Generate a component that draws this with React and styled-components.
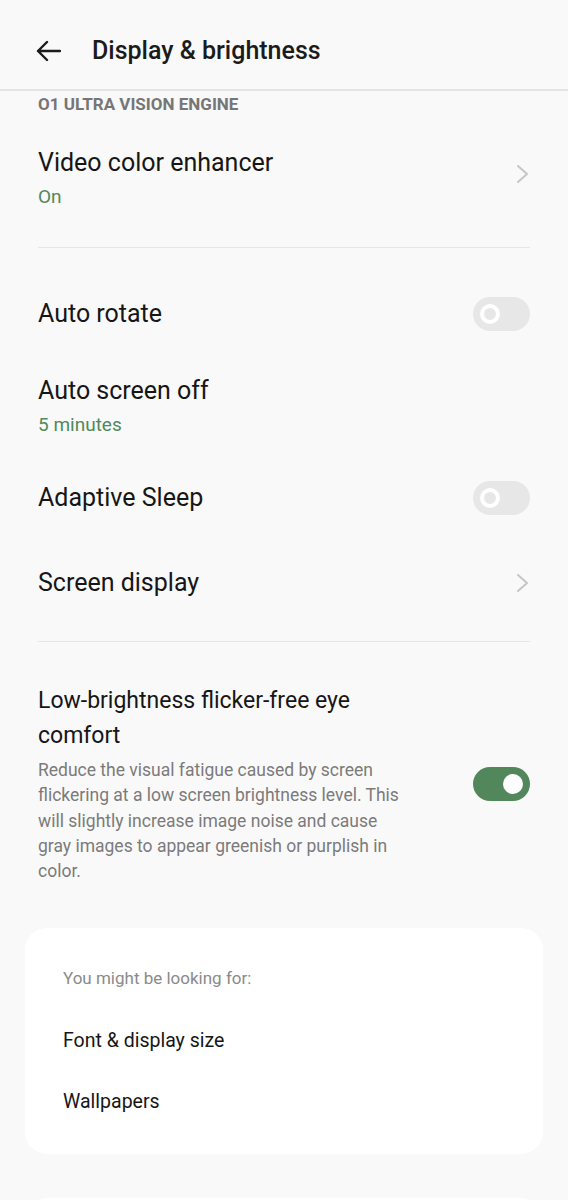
import React from 'react'
import styled, { createGlobalStyle } from 'styled-components'

const Global = createGlobalStyle`
  * { box-sizing: border-box; }
  body {
    margin: 0;
    background: #f9f9f9;
    font-family: Roboto, "Noto Sans", sans-serif;
    color: #161616;
  }
`

const Page = styled.div`
  width: 568px;
  min-height: 1200px;
  background: #f9f9f9;
  overflow: hidden;
`

// --header--
const Header = styled.header`
  height: 91px;
  display: flex;
  align-items: center;
  padding: 12px 0 0 36px;
  border-bottom: 2px solid #e4e4e4;
`
const Back = styled.svg`
  width: 25px;
  height: 22px;
  margin-right: 31px;
`
const Title = styled.h1`
  margin: 0;
  font-size: 25px;
  font-weight: 500;
  color: #1b1b1b;
`

// --settings list--
const List = styled.div`
  padding: 0 38px;
`
const SectionLabel = styled.div`
  font-size: 17px;
  font-weight: 700;
  color: #767676;
  line-height: 24px;
  padding-top: 1px;
`
const Row = styled.div`
  display: flex;
  align-items: center;
  padding: ${p => p.$top ?? 22}px 0 ${p => p.$bottom ?? 22}px;
`
const Texts = styled.div`
  flex: 1;
  display: flex;
  flex-direction: column;
  margin-right: ${p => p.$gap || 20}px;
`
const ItemTitle = styled.div`
  font-size: ${p => p.$size || 25}px;
  line-height: ${p => p.$lh || 32}px;
  color: #161616;
`
const Value = styled.div`
  font-size: 19px;
  line-height: 24px;
  margin-top: 6px;
  color: #4f8a5b;
`
const Desc = styled.div`
  font-size: 17.5px;
  line-height: 25.3px;
  color: #7b7b7b;
  margin-top: 5px;
`
const Divider = styled.div`
  height: 1px;
  background: #e6e6e6;
  margin: ${p => p.$above}px 0 ${p => p.$below}px;
`

const Track = styled.div`
  width: 57px;
  height: 34px;
  border-radius: 17px;
  flex-shrink: 0;
  background: ${p => (p.$on ? '#51875b' : '#e7e7e7')};
  display: flex;
  align-items: center;
  justify-content: ${p => (p.$on ? 'flex-end' : 'flex-start')};
  padding: 0 7px;
`
const Knob = styled.div`
  width: 20px;
  height: 20px;
  border-radius: 50%;
  background: ${p => (p.$on ? '#ffffff' : '#e7e7e7')};
  border: ${p => (p.$on ? 'none' : '4px solid #ffffff')};
`
const Chevron = styled.svg`
  width: 14px;
  height: 20px;
  flex-shrink: 0;
  margin-bottom: ${p => p.$lift || 0}px;
`

// --suggestion card--
const Card = styled.div`
  margin: ${p => p.$top}px 25px 0;
  background: #ffffff;
  border-radius: 22px;
  padding: 38px 38px 22px;
  min-height: ${p => p.$min || 0}px;
`
const CardLabel = styled.div`
  font-size: 17px;
  line-height: 24px;
  color: #8a8a8a;
  margin-bottom: 20px;
`
const CardItem = styled.div`
  font-size: 19.5px;
  line-height: 29px;
  padding: 16px 0;
  color: #161616;
`

const Switch = ({ on }) => (
  <Track $on={on}>
    <Knob $on={on} />
  </Track>
)

const Arrow = ({ lift }) => (
  <Chevron viewBox="0 0 14 20" $lift={lift}>
    <polyline points="2,2 11,10 2,18" fill="none" stroke="#c6c6c6" strokeWidth="2" strokeLinecap="round" strokeLinejoin="round" />
  </Chevron>
)

export default function App() {
  return (
    <Page>
      <Global />
      <Header>
        <Back viewBox="0 0 25 22">
          <path d="M24 11H2M11 2L2 11l9 9" fill="none" stroke="#1b1b1b" strokeWidth="2.4" strokeLinecap="round" strokeLinejoin="round" />
        </Back>
        <Title>Display &amp; brightness</Title>
      </Header>

      <List>
        <SectionLabel>O1 ULTRA VISION ENGINE</SectionLabel>
        <Row $top={31} $bottom={26}>
          <Texts>
            <ItemTitle>Video color enhancer</ItemTitle>
            <Value>On</Value>
          </Texts>
          <Arrow lift={8} />
        </Row>
        <Divider $above={12} $below={27} />

        <Row>
          <Texts><ItemTitle>Auto rotate</ItemTitle></Texts>
          <Switch on={false} />
        </Row>
        <Row>
          <Texts>
            <ItemTitle>Auto screen off</ItemTitle>
            <Value>5 minutes</Value>
          </Texts>
        </Row>
        <Row>
          <Texts><ItemTitle>Adaptive Sleep</ItemTitle></Texts>
          <Switch on={false} />
        </Row>
        <Row $top={30}>
          <Texts><ItemTitle>Screen display</ItemTitle></Texts>
          <Arrow />
        </Row>
        <Divider $above={20} $below={41} />

        <Row $top={0} $bottom={0}>
          <Texts $gap={68}>
            <ItemTitle $size={23} $lh={35}>Low-brightness flicker-free eye comfort</ItemTitle>
            <Desc>
              Reduce the visual fatigue caused by screen flickering at a low screen
              brightness level. This will slightly increase image noise and cause
              gray images to appear greenish or purplish in color.
            </Desc>
          </Texts>
          <Switch on />
        </Row>
      </List>

      <Card $top={44}>
        <CardLabel>You might be looking for:</CardLabel>
        <CardItem>Font &amp; display size</CardItem>
        <CardItem>Wallpapers</CardItem>
      </Card>
      <Card $top={44} $min={200} />
    </Page>
  )
}
